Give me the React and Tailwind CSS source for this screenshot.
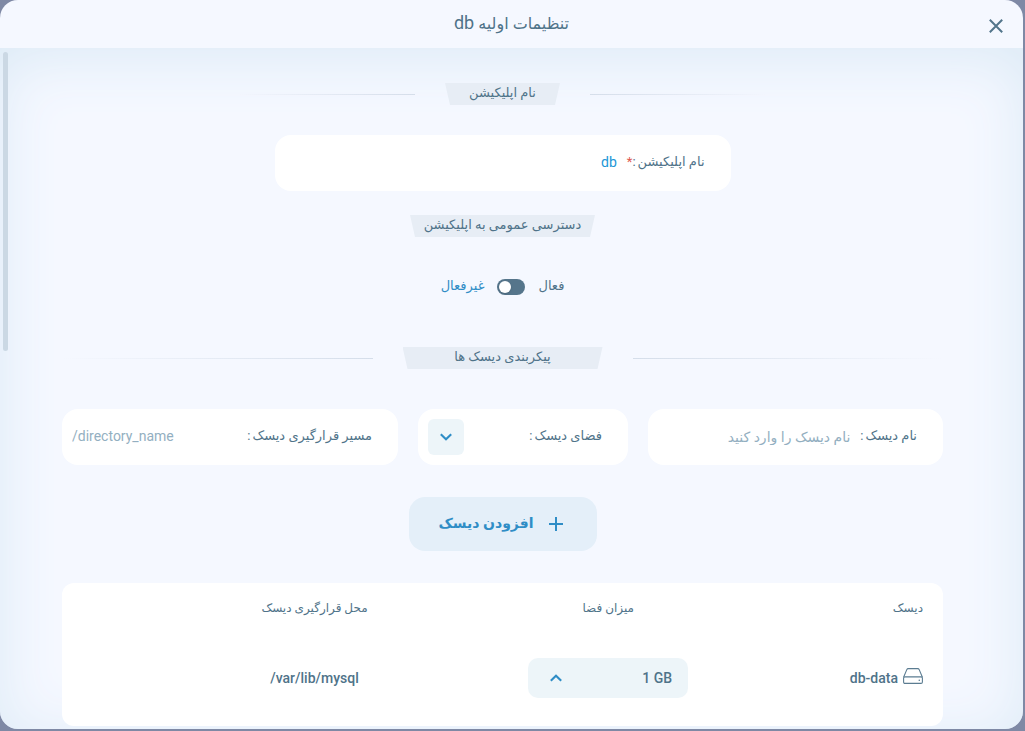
import React, { useState } from "react";

function Line({ side }) {
  return (
    <span
      className={`h-px flex-1 to-[#d5deea] ${
        side === "right" ? "bg-linear-to-l" : "bg-linear-to-r"
      } from-transparent`}
    />
  );
}

function Chevron({ up, className }) {
  return (
    <svg
      viewBox="0 0 12 8"
      className={`pointer-events-none h-2 w-3 text-[#2f8dc6] ${className || ""}`}
      fill="none"
      stroke="currentColor"
      strokeWidth="2.1"
    >
      <path d={up ? "M0.8 6.8 L6 1.8 L11.2 6.8" : "M0.8 1.2 L6 6.2 L11.2 1.2"} />
    </svg>
  );
}

function DriveIcon() {
  return (
    <svg
      viewBox="0 0 20 16"
      className="mb-1 h-4 w-5"
      fill="none"
      stroke="#5b7c91"
      strokeWidth="1.1"
      strokeLinejoin="round"
    >
      <path d="M0.6 9.2 L3.8 1.6 Q4.2 0.6 5.2 0.6 H14.8 Q15.8 0.6 16.2 1.6 L19.4 9.2" />
      <path d="M1.8 8.9 H18.2 Q19.4 8.9 19.4 10.1 V14 Q19.4 15.4 18 15.4 H2 Q0.6 15.4 0.6 14 V10.1 Q0.6 8.9 1.8 8.9 Z" />
      <circle cx="16.3" cy="12.2" r="0.8" fill="#5b7c91" stroke="none" />
    </svg>
  );
}

function SectionTitle({ children, width, lines = true, className }) {
  return (
    <div className={`mx-auto flex items-center justify-center gap-[30px] ${className || ""}`}>
      {lines && <Line side="right" />}
      <h2
        className={`h-[22px] text-center text-[13px] leading-5 bg-[#e7edf5] text-[#4f7389] [clip-path:polygon(0_0,100%_0,calc(100%-5px)_100%,5px_100%)] ${width}`}
      >
        {children}
      </h2>
      {lines && <Line side="left" />}
    </div>
  );
}

function FieldLabel({ htmlFor, children, required }) {
  return (
    <label htmlFor={htmlFor} className="flex shrink-0 gap-[2px] pb-[2px] text-[13px]">
      {children}
      <span>
        :{required && <span className="text-[#e0584f]">*</span>}
      </span>
    </label>
  );
}

function App() {
  const [appName, setAppName] = useState("db");
  const [isPublic, setIsPublic] = useState(false);
  const [diskName, setDiskName] = useState("");
  const [directory, setDirectory] = useState("");

  const disks = [{ name: "db-data", size: "1 GB", path: "/var/lib/mysql" }];

  return (
    <div
      dir="rtl"
      className="h-screen bg-[#7f89a5] pb-[2px] pr-[2px] text-[#4f7389] font-[Roboto,'DejaVu_Sans',sans-serif]"
    >
      <div className="flex h-full flex-col overflow-hidden rounded-[18px] bg-[#f5f8ff]">
        <header className="relative flex h-12 shrink-0 items-center justify-center">
          <h1 className="pb-[2px] text-base">
            تنظیمات اولیه <span className="text-lg leading-6">db</span>
          </h1>
          <button aria-label="بستن" className="absolute right-[19px] top-[18px] p-px">
            <svg viewBox="0 0 14 14" className="size-[14px]" stroke="#52758b" strokeWidth="2">
              <path d="M0.8 0.8 L13.2 13.2 M13.2 0.8 L0.8 13.2" />
            </svg>
          </button>
        </header>

        <main className="relative min-h-0 flex-1 overflow-hidden pl-[62px] pr-20 pt-[35px] shadow-[inset_0_10px_60px_#dceaf6]">
          {/* scroll thumb */}
          <span className="absolute left-[3px] top-1 h-[299px] w-[5px] rounded-full bg-[#cbd8e4]" />

          <SectionTitle width="w-[115px]" className="w-3/5">
            نام اپلیکیشن
          </SectionTitle>

          <div className="mx-auto mt-[30px] flex h-14 max-w-[456px] items-center rounded-2xl bg-white px-[26px]">
            <FieldLabel htmlFor="app-name" required>
              نام اپلیکیشن
            </FieldLabel>
            <input
              id="app-name"
              value={appName}
              onChange={(e) => setAppName(e.target.value)}
              className="min-w-0 flex-1 px-[10px] pb-[2px] text-sm text-[#2196d6] outline-none"
            />
          </div>

          <SectionTitle width="w-[185px]" lines={false} className="mt-6">
            دسترسی عمومی به اپلیکیشن
          </SectionTitle>

          <label className="mx-auto mt-10 flex h-5 w-fit cursor-pointer items-center gap-[13px] text-[13px]">
            <span className="pb-[2px]">فعال</span>
            <input
              type="checkbox"
              role="switch"
              checked={isPublic}
              onChange={(e) => setIsPublic(e.target.checked)}
              className="peer sr-only"
            />
            <span className="flex h-4 w-7 items-center justify-end rounded-full bg-[#55758b] px-[2px] peer-checked:justify-start">
              <span className="size-3 rounded-full bg-white shadow" />
            </span>
            <span className="pb-[2px] font-medium text-[#2f8dc6]">غیرفعال</span>
          </label>

          <SectionTitle width="w-[200px]" className="mt-[50px]">
            پیکربندی دیسک ها
          </SectionTitle>

          <div className="mt-10 grid grid-cols-[295fr_210fr_336fr] gap-5">
            <div className="flex h-14 items-center rounded-2xl bg-white pl-[10px] pr-[26px]">
              <FieldLabel htmlFor="disk-name">نام دیسک</FieldLabel>
              <input
                id="disk-name"
                value={diskName}
                onChange={(e) => setDiskName(e.target.value)}
                placeholder="نام دیسک را وارد کنید"
                className="min-w-0 flex-1 px-[10px] text-sm outline-none placeholder:text-[#93afc1]"
              />
            </div>

            <div className="flex h-14 items-center justify-between rounded-2xl bg-white pl-[10px] pr-[26px]">
              <FieldLabel htmlFor="disk-size">فضای دیسک</FieldLabel>
              <div className="relative flex size-9 items-center justify-center">
                <select
                  id="disk-size"
                  className="absolute inset-0 appearance-none rounded-md bg-[#edf5f9] text-transparent outline-none"
                >
                  <option value=""></option>
                </select>
                <Chevron className="relative" />
              </div>
            </div>

            <div className="flex h-14 items-center rounded-2xl bg-white pl-[10px] pr-[26px]">
              <FieldLabel htmlFor="directory">مسیر قرارگیری دیسک</FieldLabel>
              <input
                id="directory"
                dir="ltr"
                value={directory}
                onChange={(e) => setDirectory(e.target.value)}
                placeholder="/directory_name"
                className="min-w-0 flex-1 pb-[2px] text-sm outline-none placeholder:text-[#93afc1]"
              />
            </div>
          </div>

          <button className="mx-auto mt-8 flex h-[54px] w-[188px] items-center justify-center gap-[15px] rounded-2xl bg-[#e4eff9] pr-1 text-sm font-bold text-[#2f8dc6]">
            <svg viewBox="0 0 14 14" className="size-[14px]" stroke="currentColor" strokeWidth="2">
              <path d="M7 0 V14 M0 7 H14" />
            </svg>
            <span className="pb-[2px]">افزودن دیسک</span>
          </button>

          <div className="mt-8 rounded-xl bg-white pb-1">
            <table className="w-full table-fixed">
              <thead>
                <tr className="h-[50px] text-xs">
                  <th className="w-[188px] pr-5 text-right font-normal">دیسک</th>
                  <th className="w-1/3 font-normal">میزان فضا</th>
                  <th className="w-1/3 font-normal">محل قرارگیری دیسک</th>
                  <td></td>
                </tr>
              </thead>
              <tbody>
                {disks.map((disk) => (
                  <tr key={disk.name} className="h-[89px] text-sm font-medium">
                    <td className="pr-5">
                      <div className="flex items-center gap-[5px]">
                        <DriveIcon />
                        {disk.name}
                      </div>
                    </td>
                    <td>
                      <div className="relative mx-auto w-40">
                        <select
                          aria-label="میزان فضا"
                          dir="ltr"
                          defaultValue={disk.size}
                          className="h-10 w-full appearance-none rounded-[10px] bg-[#edf5f9] px-4 text-right outline-none"
                        >
                          <option>{disk.size}</option>
                        </select>
                        <Chevron up className="absolute left-[22px] top-4" />
                      </div>
                    </td>
                    <td className="text-center" dir="ltr">
                      {disk.path}
                    </td>
                    <td></td>
                  </tr>
                ))}
              </tbody>
            </table>
          </div>
        </main>
      </div>
    </div>
  );
}

export default App;
